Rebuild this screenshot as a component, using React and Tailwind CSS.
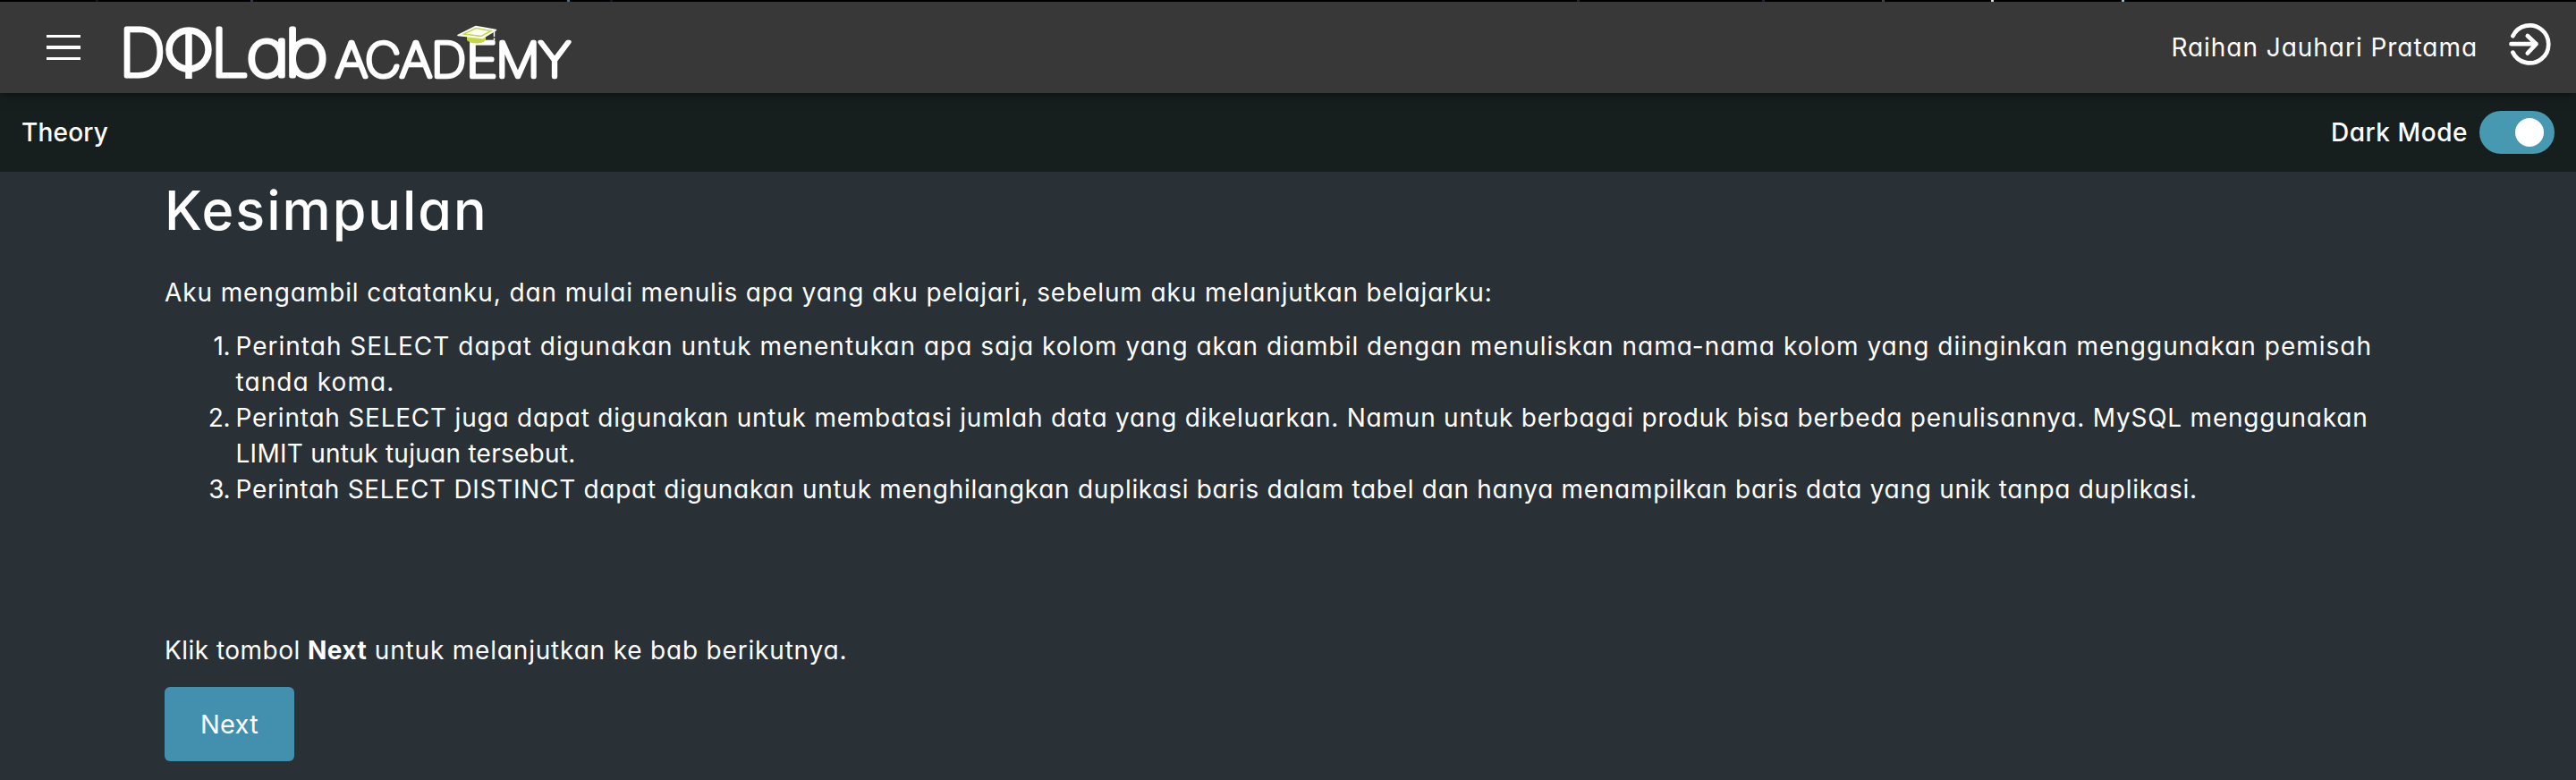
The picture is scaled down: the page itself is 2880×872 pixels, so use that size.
const glyphs = [
  { c: "D", x: 133, w: 52, big: true },
  { c: "L", x: 235.5, w: 43, big: true },
  { c: "a", x: 275, w: 49, big: true },
  { c: "b", x: 318, w: 49, big: true },
  { c: "A", x: 375, w: 36 },
  { c: "C", x: 408, w: 40 },
  { c: "A", x: 447, w: 36 },
  { c: "D", x: 482, w: 39 },
  { c: "E", x: 521, w: 35 },
  { c: "M", x: 554.5, w: 49 },
  { c: "Y", x: 602, w: 36 },
];

function Logo() {
  return (
    <svg viewBox="130 2 520 102" className="h-[102px] w-[520px] shrink-0 overflow-visible" role="img" aria-label="DQLab Academy">
      {glyphs.map((g, i) => (
        <text
          key={i}
          x={g.x}
          y={g.big ? 85.4 : 86.4}
          textLength={g.w}
          lengthAdjust="spacingAndGlyphs"
          fill="#fff"
          stroke="#fff"
          strokeWidth={g.big ? 5 : 4.7}
          strokeLinejoin="round"
          className={g.big ? "text-[72.5px] font-thin" : "text-[53px] font-thin"}
        >
          {g.c}
        </text>
      ))}
      <ellipse cx="211" cy="55.5" rx="22" ry="21.5" fill="none" stroke="#fff" strokeWidth="7.5" />
      <path d="M211 36V88" stroke="#fff" strokeWidth="7.5" />
      <path d="M522 40h21v5q-4 3.500-10.500 3.500T522 45z" fill="#c5d645" />
      <path d="M532 29.500 554.500 33.500 539.500 42.500 512 39.500z" fill="#fff" stroke="#fff" strokeWidth="1.500" strokeLinejoin="round" />
      <path d="M532 31.500 549 34.500 538 40.500 518.500 38z" fill="#fff" stroke="#c5d645" strokeWidth="1.500" />
      <path d="M552.500 35V45" stroke="#fff" strokeWidth="1.500" strokeDasharray="6 1.500" />
    </svg>
  );
}

function ExitIcon() {
  return (
    <svg viewBox="0 0 48 48" className="size-12 shrink-0" fill="none" stroke="#fff" strokeWidth="4.700" strokeLinecap="round" strokeLinejoin="round">
      <path d="M5.400 15.200A21 21 0 1 1 5.400 33.600" />
      <path d="M3.500 24.200H31.500M21.800 15 31.500 24.200 21.800 34.500" />
    </svg>
  );
}

const ticks = [
  { gap: "ml-[107px]", color: "bg-[#12181d]" },
  { gap: "ml-[170px]", color: "bg-[#39405f]" },
  { gap: "ml-[351px]", color: "bg-[#5f7fa6]" },
  { gap: "ml-[45px]", color: "bg-[#101a2c]" },
  { gap: "ml-[1078px]", color: "bg-[#222a3a]" },
  { gap: "ml-[204px]", color: "bg-[#1f2740]" },
  { gap: "ml-[131px]", color: "bg-[#4c5058]" },
  { gap: "ml-[119px]", color: "bg-white" },
  { gap: "ml-[143px]", color: "bg-[#b9dcf2]" },
];

const points = [
  [
    {
      t: "Perintah SELECT dapat digunakan untuk menentukan apa saja kolom yang akan diambil dengan menuliskan nama-nama kolom yang diinginkan menggunakan pemisah",
      s: "tracking-[1.003px]",
    },
    { t: "tanda koma.", s: "tracking-[1.09px]" },
  ],
  [
    {
      t: "Perintah SELECT juga dapat digunakan untuk membatasi jumlah data yang dikeluarkan. Namun untuk berbagai produk bisa berbeda penulisannya. MySQL menggunakan",
      s: "tracking-[0.776px]",
    },
    { t: "LIMIT untuk tujuan tersebut.", s: "tracking-[0.27px]" },
  ],
  [
    {
      t: "Perintah SELECT DISTINCT dapat digunakan untuk menghilangkan duplikasi baris dalam tabel dan hanya menampilkan baris data yang unik tanpa duplikasi.",
      s: "tracking-[0.702px]",
    },
  ],
];

export default function App() {
  return (
    <div className="flex h-[872px] w-[2880px] flex-col overflow-hidden bg-[#293137] font-['Inter','Noto_Sans',sans-serif] text-[28px] leading-10 text-white [font-feature-settings:'cv11']">
      <div className="flex h-0.5 shrink-0 bg-black">
        {ticks.map((t, i) => (
          <span key={i} className={`h-0.5 w-[3px] shrink-0 ${t.gap} ${t.color}`} />
        ))}
      </div>

      <header className="z-10 flex h-[102px] shrink-0 items-center bg-[#383838] pr-7 pl-[52px] shadow-[0_2px_12px_rgba(0,0,0,0.5)]">
        <button className="mr-10 flex w-[38px] shrink-0 flex-col gap-[9px]" aria-label="Menu">
          <span className="h-[3.500px] bg-white" />
          <span className="h-[3.500px] bg-white" />
          <span className="h-[3.500px] bg-white" />
        </button>
        <Logo />
        <span className="mr-[34px] ml-auto tracking-[0.96px] whitespace-nowrap">Raihan Jauhari Pratama</span>
        <span className="-mt-2"><ExitIcon /></span>
      </header>

      <div className="flex h-[88px] shrink-0 items-center bg-[#171f1e] pr-6 pl-6 font-medium">
        <span className="tracking-[0.2px]">Theory</span>
        <span className="mr-[13px] ml-auto tracking-[0.55px]">Dark Mode</span>
        <span className="flex h-12 w-[84px] items-center justify-end rounded-full bg-[#4799b1] pr-3">
          <span className="size-8 rounded-full bg-white" />
        </span>
      </div>

      <main className="flex flex-col items-start pt-[7px] pl-[184px]">
        <h1 className="text-[61px] leading-[72px] font-medium tracking-[1.980px]">Kesimpulan</h1>
        <p className="mt-9 tracking-[0.877px] whitespace-nowrap">
          Aku mengambil catatanku, dan mulai menulis apa yang aku pelajari, sebelum aku melanjutkan belajarku:
        </p>
        <ol className="mt-5">
          {points.map((lines, i) => (
            <li key={i} className="flex">
              <span className="w-[73px] shrink-0 text-right tracking-[-0.500px]">{i + 1}.</span>
              <div className="ml-[6.500px]">
                {lines.map((l) => (
                  <p key={l.t} className={`whitespace-nowrap ${l.s}`}>{l.t}</p>
                ))}
              </div>
            </li>
          ))}
        </ol>
        <p className="mt-[140px] tracking-[0.815px] whitespace-nowrap">
          <span className="tracking-[0.47px]">Klik tombol </span>
          <b className="tracking-[0.42px]">Next</b> untuk melanjutkan ke bab berikutnya.
        </p>
        <button className="mt-[21px] flex h-[83px] w-[145px] items-center justify-center rounded-[6px] bg-[#438fae] text-[29px] tracking-[0.300px]">
          Next
        </button>
      </main>
    </div>
  );
}
